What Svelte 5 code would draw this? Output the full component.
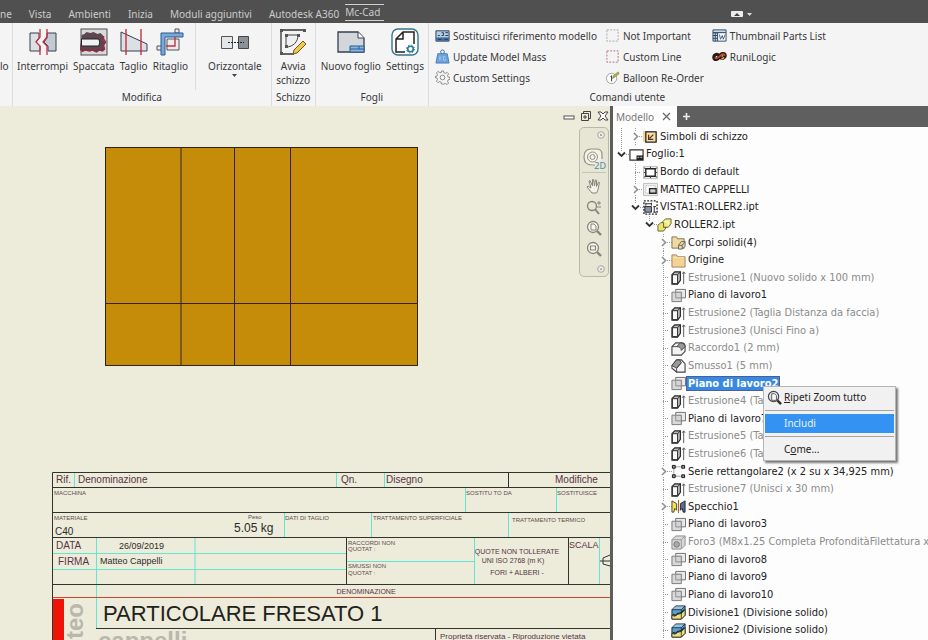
<script lang="ts">
  /**
   * Drawing workspace: ribbon, sheet view and model browser
   */

  interface TreeRow {
    label: string;
    icon: string;
    depth: number;
    arrow?: "open" | "closed";
    muted?: boolean;
    selected?: boolean;
    root?: boolean;
  }

  const tabs = ["ne", "Vista", "Ambienti", "Inizia", "Moduli aggiuntivi", "Autodesk A360"];

  const modifyTools = [
    { label: "Interrompi", icon: "break" },
    { label: "Spaccata", icon: "breakout" },
    { label: "Taglio", icon: "slice" },
    { label: "Ritaglio", icon: "crop" },
  ];

  const userCommands = [
    [
      { label: "Sostituisci riferimento modello", icon: "replace" },
      { label: "Update Model Mass", icon: "mass" },
      { label: "Custom Settings", icon: "gear" },
    ],
    [
      { label: "Not Important", icon: "dash-grey" },
      { label: "Custom Line", icon: "dash-red" },
      { label: "Balloon Re-Order", icon: "balloon" },
    ],
    [
      { label: "Thumbnail Parts List", icon: "parts" },
      { label: "RuniLogic", icon: "logic" },
    ],
  ];

  const rows: TreeRow[] = [
    { label: "Simboli di schizzo", icon: "sketch", depth: 1, arrow: "closed", root: true },
    { label: "Foglio:1", icon: "sheet", depth: 0, arrow: "open" },
    { label: "Bordo di default", icon: "border", depth: 1 },
    { label: "MATTEO CAPPELLI", icon: "title", depth: 1, arrow: "closed" },
    { label: "VISTA1:ROLLER2.ipt", icon: "view", depth: 1, arrow: "open" },
    { label: "ROLLER2.ipt", icon: "part", depth: 2, arrow: "open" },
    { label: "Corpi solidi(4)", icon: "bodies", depth: 3, arrow: "closed" },
    { label: "Origine", icon: "folder", depth: 3, arrow: "closed" },
    { label: "Estrusione1 (Nuovo solido x 100 mm)", icon: "extrude", depth: 3, muted: true },
    { label: "Piano di lavoro1", icon: "plane", depth: 3 },
    { label: "Estrusione2 (Taglia Distanza da faccia)", icon: "extrude", depth: 3, muted: true },
    { label: "Estrusione3 (Unisci Fino a)", icon: "extrude", depth: 3, muted: true },
    { label: "Raccordo1 (2 mm)", icon: "fillet", depth: 3, muted: true },
    { label: "Smusso1 (5 mm)", icon: "chamfer", depth: 3, muted: true },
    { label: "Piano di lavoro2", icon: "plane", depth: 3, selected: true },
    { label: "Estrusione4 (Ta", icon: "extrude", depth: 3, muted: true },
    { label: "Piano di lavoro7", icon: "plane", depth: 3 },
    { label: "Estrusione5 (Ta", icon: "extrude", depth: 3, muted: true },
    { label: "Estrusione6 (Ta", icon: "extrude", depth: 3, muted: true },
    { label: "Serie rettangolare2 (x 2 su x 34,925 mm)", icon: "pattern", depth: 3, arrow: "closed" },
    { label: "Estrusione7 (Unisci x 30 mm)", icon: "extrude", depth: 3, muted: true },
    { label: "Specchio1", icon: "mirror", depth: 3, arrow: "closed" },
    { label: "Piano di lavoro3", icon: "plane", depth: 3 },
    { label: "Foro3 (M8x1.25 Completa ProfonditàFilettatura x", icon: "hole", depth: 3, muted: true },
    { label: "Piano di lavoro8", icon: "plane", depth: 3 },
    { label: "Piano di lavoro9", icon: "plane", depth: 3 },
    { label: "Piano di lavoro10", icon: "plane", depth: 3 },
    { label: "Divisione1 (Divisione solido)", icon: "split", depth: 3 },
    { label: "Divisione2 (Divisione solido)", icon: "split", depth: 3 },
  ];
</script>

{#snippet icon(name: string, size: number)}
  <svg width={size} height={size} aria-hidden="true"><use href="#i-{name}" /></svg>
{/snippet}

{#snippet bigTool(label: string, name: string)}
  <button class="tool">
    {@render icon(name, 28)}
    <span>{label}</span>
  </button>
{/snippet}

<svg class="defs" aria-hidden="true">
  <!-- ribbon, large -->
  <symbol id="i-break" viewBox="0 0 28 28">
    <path d="M1 5h9v5l-3 4 4 4v5H1z" fill="#dde0e4" stroke="#34404f" />
    <path d="M27 5h-9v5l-3 4 4 4v5h8z" fill="#c3cad3" stroke="#34404f" />
    <path d="M11 1v8l-4 5 4 4v9M18 1v8l-4 5 4 4v9" fill="none" stroke="#c6313f" stroke-width="1.3" />
  </symbol>
  <symbol id="i-breakout" viewBox="0 0 28 28">
    <rect x="1" y="1" width="26" height="26" fill="#d9d9dc" stroke="#4a4a50" />
    <path d="M1.500 10V7l3-1 2-2 4 1 3-1 4 2 3-1 3 3v4l2 3-2 3 1 4-3 1-2-1-3 2-4-2-3 1-4-1-3 2-3-2z" fill="#5d4650" />
    <path d="M1.500 19l1 4 3-1 4 1 3-1 4 2 3-2 3 1 2-2-1-4 2-3-2-3V8" fill="none" stroke="#9b2740" stroke-width="1.500" />
    <path d="M1.500 11h17c1.500 2 1.500 5 0 7h-17z" fill="#f1f1f1" stroke="#222" />
  </symbol>
  <symbol id="i-slice" viewBox="0 0 28 28">
    <path d="M1 4l26 12v7H1z" fill="#dbe0e7" stroke="#34404f" />
    <path d="M6 1v26M21 1v26" stroke="#c6313f" stroke-width="1.4" />
  </symbol>
  <symbol id="i-crop" viewBox="0 0 28 28">
    <path d="M1 18h5v4H1zM19 1h4v4h-4zM11 11h12v11H11z" fill="#ececec" stroke="#555" />
    <path d="M19 9v9h-9" fill="none" stroke="#c6313f" stroke-width="1.4" />
    <path d="M5 5h22v4H9v18H5z" fill="#79a9d8" stroke="#2b5a90" />
  </symbol>
  <symbol id="i-align" viewBox="0 0 28 28">
    <path d="M0.500 8.500h11v12h-11z" fill="#e3e6e8" stroke="#555" />
    <path d="M17.500 8.500h10v12h-10z" fill="#8a9199" stroke="#454545" />
    <path d="M7 14.500h16" stroke="#222" stroke-dasharray="2 1" />
  </symbol>
  <symbol id="i-start" viewBox="0 0 28 28">
    <path d="M2 2h24M2 2v24h13" fill="none" stroke="#333" stroke-width="1.3" />
    <path d="M7 7h12c0 7-5 12-12 12z" fill="#f0f0f0" stroke="#444" />
    <path d="M1 1h3v3H1zM24 1h3v3h-3zM1 24h3v3H1zM6 6h3v3H6zM18 6h3v3h-3zM6 17h3v3H6z" fill="#555" />
    <path d="M14 26l1-4 9-9 3 3-9 9z" fill="#f1c84d" stroke="#6f5717" />
  </symbol>
  <symbol id="i-newsheet" viewBox="0 0 28 28">
    <path d="M1 4h20l6 6v14H1z" fill="#d3d6db" stroke="#34404f" stroke-width="1.3" />
    <path d="M21 4v6h6" fill="#fff" stroke="#34404f" />
    <path d="M13 18h14v6H13zM13 21h14M22 18v3" fill="#8bb4e2" stroke="#2b5a90" />
  </symbol>
  <symbol id="i-settings" viewBox="0 0 28 28">
    <rect x="1" y="1" width="26" height="26" rx="6" fill="#fff" stroke="#35768d" stroke-width="1.4" />
    <path d="M14 24H5V11l7-7h11v12M12 4v7H5" fill="none" stroke="#222" stroke-width="1.5" />
    <circle cx="19.500" cy="21" r="2.800" fill="none" stroke="#27789b" stroke-width="1.6" />
    <circle cx="19.500" cy="21" r="4" fill="none" stroke="#27789b" stroke-dasharray="1.500 1.640" />
  </symbol>
  <!-- ribbon, small -->
  <symbol id="i-replace" viewBox="0 0 16 16">
    <path d="M1 3h14v11H1z" fill="#b5cce7" stroke="#26384f" />
    <path d="M1 10h14v4H1z" fill="#46729f" />
    <path d="M3 8h2M7 5h2v3H7M11 5h3M11 8h3M3 12h4M10 12h4" fill="none" stroke="#1f3450" />
  </symbol>
  <symbol id="i-mass" viewBox="0 0 16 16">
    <circle cx="8" cy="3" r="2" fill="none" stroke="#406f9e" />
    <path d="M3 5h10l2 10H1z" fill="#6ea2db" stroke="#4a7db4" />
    <path d="M5 8v4M5 10l2-2M5 10l2 2M11 8H9v4h2v-2" fill="none" stroke="#9cc5ee" />
  </symbol>
  <symbol id="i-gear" viewBox="0 0 16 16">
    <path d="M7 1h2l.5 2 1.500.6 2-1 1.400 1.400-1 2 .6 1.500 2 .5v2l-2 .5-.6 1.500 1 2-1.400 1.400-2-1-1.500.6L9 15H7l-.5-2-1.500-.6-2 1L1.600 12l1-2L2 8.500 0 8V7l2-.5.6-1.500-1-2L3 1.600l2 1L6.500 3z" fill="none" stroke="#858585" />
    <circle cx="8" cy="8" r="2.500" fill="none" stroke="#858585" />
  </symbol>
  <symbol id="i-dash-grey" viewBox="0 0 16 16">
    <rect x="2" y="2" width="12" height="12" fill="none" stroke="#a3a3a3" stroke-dasharray="2 1.500" />
  </symbol>
  <symbol id="i-dash-red" viewBox="0 0 16 16">
    <rect x="2" y="2" width="12" height="12" fill="none" stroke="#aa6c74" stroke-dasharray="2 1.500" />
  </symbol>
  <symbol id="i-balloon" viewBox="0 0 16 16">
    <circle cx="7" cy="9" r="5.500" fill="#fafafa" stroke="#a0a0a0" />
    <path d="M6 7l1-1v6" fill="none" stroke="#333" />
    <path d="M8 9l1-3 5-4 1 2-5 4z" fill="#a9b944" stroke="#69792b" stroke-width=".6" />
  </symbol>
  <symbol id="i-parts" viewBox="0 0 16 16">
    <path d="M1 2h14v3H1zM1 5h5v9H1zM1 8h5M1 11h5M3.500 5v9" fill="#c9d9e6" stroke="#30485f" />
    <path d="M6 5h9v9H6z" fill="#fff" stroke="#30485f" />
    <path d="M8 7l1 5 2-4 1 4 2-5" fill="none" stroke="#2f5d90" />
  </symbol>
  <symbol id="i-logic" viewBox="0 0 16 16">
    <path d="M8 8c-2 4-6 4-6 1s4-5 6-1 6 1 6-1-4-4-6 1" fill="none" stroke="#2b1a14" stroke-width="3.500" />
    <path d="M3 9c1 2 3 1 5-1s4-4 6-1" fill="none" stroke="#d5472c" stroke-width="1.600" />
    <path d="M10 11l3-2" stroke="#e6b33c" stroke-width="1.500" />
  </symbol>
  <!-- browser tree -->
  <symbol id="i-sketch" viewBox="0 0 16 16">
    <path d="M0 2h5l1 1h9v11H0z" fill="#f1d3a0" />
    <rect x="3" y="3" width="11" height="11" fill="#f4dfa5" stroke="#222" stroke-width="1.300" />
    <path d="M6 6v5h5M7 10l4-4" fill="none" stroke="#5a2c1c" stroke-width="1.300" />
  </symbol>
  <symbol id="i-sheet" viewBox="0 0 16 16">
    <path d="M1 3h14v11H1z" fill="#fff" stroke="#333" stroke-width="1.300" />
    <path d="M8 9h7v5H8z" fill="#222" />
    <path d="M9 11h2M12 11h2" stroke="#ccc" />
  </symbol>
  <symbol id="i-border" viewBox="0 0 16 16">
    <path d="M.5 1.500h15v13H.5z" fill="#eee" stroke="#bbb" />
    <path d="M3 4h10v8H3z" fill="#fff" stroke="#222" stroke-width="1.500" />
    <path d="M1 8h2M13 8h2M8 2v2M8 12v2M1 3l2 1M15 3l-2 1M1 13l2-1M15 13l-2-1" stroke="#333" />
  </symbol>
  <symbol id="i-title" viewBox="0 0 16 16">
    <path d="M.5 1.500h15v13H.5z" fill="#eee" stroke="#bbb" />
    <path d="M3 4h10v8H3z" fill="#fff" stroke="#aaa" stroke-dasharray="1 1" />
    <path d="M7 7h7v5H7z" fill="#ccc" stroke="#222" stroke-width="1.400" />
  </symbol>
  <symbol id="i-view" viewBox="0 0 16 16">
    <path d="M1 1h14v14H1z" fill="none" stroke="#222" stroke-width="1.400" stroke-dasharray="2 1.500" />
    <path d="M2 7h7v6H2z" fill="#8795ab" stroke="#222" />
    <path d="M3 4h6M3 3v3M9 3v3M12 7v6M11 7h3M11 13h3" stroke="#222" />
  </symbol>
  <symbol id="i-part" viewBox="0 0 16 16">
    <path d="M6 5l3-3h6v5l-3 4H6z" fill="#f0ea8a" stroke="#66622c" />
    <path d="M1 9l3-3h3v5h3l-3 4H1z" fill="#ebe36c" stroke="#66622c" />
    <path d="M8 5h4v4" fill="none" stroke="#fffcd6" />
  </symbol>
  <symbol id="i-bodies" viewBox="0 0 16 16">
    <path d="M1 2h5l1 2h7v10H1z" fill="#efd9a0" stroke="#87714a" />
    <path d="M8 11l3-4h4v5l-3 3H8z" fill="#dedebb" stroke="#68664d" />
    <path d="M8 11h4v4M12 11l3-4" fill="none" stroke="#68664d" />
  </symbol>
  <symbol id="i-folder" viewBox="0 0 16 16">
    <path d="M1 2h5l1 2h8v11H1z" fill="#f3d395" stroke="#a58251" />
    <path d="M2 5h12" stroke="#fae5b5" />
  </symbol>
  <symbol id="i-extrude" viewBox="0 0 16 16">
    <path d="M1 5l3-3h6v9l-3 4H1z" fill="#bdbdbd" stroke="#222" stroke-width="1.200" />
    <path d="M1.500 5H7v9.500H1.500z" fill="#f7f7f7" stroke="#222" />
    <path d="M7 5l3-3" stroke="#222" />
    <path d="M13.500 15V2M12 4l1.500-2L15 4" fill="none" stroke="#555" />
  </symbol>
  <symbol id="i-plane" viewBox="0 0 16 16">
    <path d="M5 1.500h10.500v9H5z" fill="#e8e8e8" stroke="#6d6d6d" />
    <path d="M1 4.500h10v10H1z" fill="#cfcfcf" fill-opacity=".8" stroke="#777" />
    <path d="M5 4v6.500h6" fill="none" stroke="#999" />
  </symbol>
  <symbol id="i-fillet" viewBox="0 0 16 16">
    <path d="M1 6l4-4h6c3 0 4 2 4 4v5l-4 4H1z" fill="#f3f3f3" stroke="#444" stroke-width="1.200" />
    <path d="M6 6l4-4c3 0 5 2 5 4l-4 4c0-3-2-4-5-4z" fill="#999" stroke="#444" />
    <path d="M1 6h5" stroke="#444" />
  </symbol>
  <symbol id="i-chamfer" viewBox="0 0 16 16">
    <path d="M1 8l5-6h5l4 4v9H6l-5-4z" fill="#f6f6f6" stroke="#444" stroke-width="1.200" />
    <path d="M1 8l5-6h3l2 3-5 6z" fill="#999" stroke="#444" />
    <path d="M6 15v-4l5-6" fill="none" stroke="#444" />
  </symbol>
  <symbol id="i-pattern" viewBox="0 0 16 16">
    <path d="M3 3h10M3 13h10M3 3v10" stroke="#444" stroke-dasharray="1 1" />
    <path d="M1.500 1.500h3v3h-3zM11.500 1.500h3v3h-3zM1.500 11.500h3v3h-3zM11.500 11.500h3v3h-3z" fill="#999" stroke="#111" />
  </symbol>
  <symbol id="i-mirror" viewBox="0 0 16 16">
    <path d="M1 2l5 3v7l-2-2-1 4H1z" fill="#f3e15b" stroke="#4c451b" />
    <path d="M15 2l-5 3v7l2-2 1 4h2z" fill="#526f9d" stroke="#222" />
    <path d="M8 1v14" stroke="#b5622e" stroke-width="1.200" />
  </symbol>
  <symbol id="i-hole" viewBox="0 0 16 16">
    <path d="M1 5l4-4h10v10l-4 4H1z" fill="#d9d9d9" stroke="#888" />
    <path d="M1 5h10v10M11 5l4-4" fill="none" stroke="#999" />
    <circle cx="6" cy="10" r="3" fill="#aaa" stroke="#777" />
  </symbol>
  <symbol id="i-split" viewBox="0 0 16 16">
    <path d="M1 5l4-4h10v10l-4 4H1z" fill="#5a9fd2" stroke="#222" />
    <path d="M1 11l3 1 3-2 4-1 4-4v6l-4 4H1z" fill="#f0df77" stroke="#222" stroke-width=".8" />
    <path d="M2 4.500L5 1.500h9l-3 3z" fill="#8fc3e8" />
    <path d="M1 5h10l4-4M11 5v10" fill="none" stroke="#222" stroke-width=".8" />
    <path d="M2 10l3 1 2-2 4-1 3-3" fill="none" stroke="#222" stroke-width="1.200" />
  </symbol>
  <!-- view tools -->
  <symbol id="i-wheel" viewBox="0 0 24 24">
    <path d="M20 13V8q0-5-6-5H9Q2 3 2 11t8 8h3" fill="#f3f2e7" stroke="#919186" stroke-width="1.200" />
    <circle cx="10.500" cy="11" r="5" fill="none" stroke="#919186" />
    <circle cx="10.500" cy="11" r="2.500" fill="none" stroke="#919186" />
  </symbol>
  <symbol id="i-hand" viewBox="0 0 16 16">
    <path d="M6 15c-2-2-3-4-5-6l1-1 3 2L3 3l1-.5L6.500 8 6.500 1.500h1L8.500 8l1-6 1 .2L10.500 8.500l2-4.500 1 .5c-1 3-1 8-3 10.500z" fill="#f4f3e9" stroke="#85857b" />
  </symbol>
  <symbol id="i-zoom" viewBox="0 0 16 16">
    <circle cx="6" cy="7" r="4.500" fill="none" stroke="#85857b" stroke-width="1.300" />
    <path d="M9 10l4 5" stroke="#85857b" stroke-width="2" />
    <path d="M11 4h4M13 2v4M11 8h4" stroke="#85857b" />
  </symbol>
  <symbol id="i-zoomall" viewBox="0 0 16 16">
    <circle cx="7" cy="7" r="5.500" fill="#f7f6ee" stroke="#85857b" stroke-width="1.300" />
    <path d="M5 4h3l2 2v4H5z" fill="none" stroke="#85857b" />
    <path d="M11 11l4 4" stroke="#85857b" stroke-width="2.400" />
  </symbol>
  <symbol id="i-zoomwin" viewBox="0 0 16 16">
    <circle cx="7" cy="7" r="5.500" fill="#f7f6ee" stroke="#85857b" stroke-width="1.300" />
    <path d="M4.500 5h5v4h-5z" fill="none" stroke="#85857b" stroke-width="1.200" />
    <path d="M11 11l4 4" stroke="#85857b" stroke-width="2.400" />
  </symbol>
  <symbol id="i-menuzoom" viewBox="0 0 16 16">
    <circle cx="7" cy="7" r="5.500" fill="#dde5ec" stroke="#444" stroke-width="1.200" />
    <path d="M5 4h3l2 2v5H5z" fill="#fff" stroke="#555" />
    <path d="M11 11l4 4" stroke="#333" stroke-width="2.600" />
  </symbol>
</svg>

<div class="workspace">
  <nav class="tabs" aria-label="Ribbon">
    {#each tabs as tab}
      <a href="#{tab}">{tab}</a>
    {/each}
    <a class="active" href="#mc-cad">Mc-Cad</a>
    <button class="collapse" aria-label="Riduci">
      <svg width="22" height="8" viewBox="0 0 22 8">
        <rect y="1" width="12" height="6" rx="1" fill="#eee" />
        <path d="M3 6l3-3 3 3z" fill="#444" />
        <path d="M16 3h5l-2.500 3z" fill="#ddd" />
      </svg>
    </button>
  </nav>

  <header class="ribbon">
    <section class="group cut">
      <div class="tools"><span>lo</span></div>
    </section>
    <section class="group modify">
      <div class="tools">
        {#each modifyTools as tool}
          {@render bigTool(tool.label, tool.icon)}
        {/each}
        <div class="align">
          <button class="tool">
            {@render icon("align", 28)}
            <span>Orizzontale</span>
            <svg width="5" height="3" viewBox="0 0 5 3"><path d="M0 0h5L2.500 3z" fill="#444" /></svg>
          </button>
        </div>
      </div>
      <h2>Modifica</h2>
    </section>
    <section class="group sketch">
      <div class="tools">{@render bigTool("Avvia schizzo", "start")}</div>
      <h2>Schizzo</h2>
    </section>
    <section class="group sheets">
      <div class="tools">
        {@render bigTool("Nuovo foglio", "newsheet")}
        {@render bigTool("Settings", "settings")}
      </div>
      <h2>Fogli</h2>
    </section>
    <section class="group user">
      <div class="tools">
        {#each userCommands as column}
          <div class="column">
            {#each column as command}
              <button class="command">
                {@render icon(command.icon, 15)}
                <span>{command.label}</span>
              </button>
            {/each}
          </div>
        {/each}
      </div>
      <h2>Comandi utente</h2>
    </section>
  </header>

  <main>
    <div class="canvas">
      <svg class="sheet" width="610" height="534" viewBox="0 106 610 534" role="img" aria-label="Tavola">
        <rect x="105.500" y="147.500" width="312" height="218" fill="#c58c09" stroke="#2b2212" />
        <path class="edge" d="M181 147v219M234.500 147v219M290.500 147v219M105 303.500h313" />

        <path class="cyan" d="M74.500 473v14M336.500 473v14M384.500 473v14M465.500 488v25M556.500 488v25M284.500 513v24M371.500 513v24M508.500 513v24" />
        <path class="cyan" d="M96.500 538v90M195 538v46M53 553.500h293M53 569.500h293M346 561.500h128M474.500 538v46M599.500 538v46" />
        <path class="frame" d="M610 472.500H52.500V640M52 487.500h558M52 512.500h558M52 537.500h558M52 584.500h558M508.500 473v14M346.500 538v46M568.500 538v46M96 628.500h514M435.500 628v12" />
        <path d="M53 597.500h557" stroke="#c8452f" />
        <rect x="53" y="599" width="11" height="41" fill="#ee1208" />
        <path d="M600 561h10M610 555l-7 3v6l7 2" fill="none" stroke="#333" />

        <g class="heads">
          <text x="56" y="483">Rif.</text>
          <text x="78" y="483">Denominazione</text>
          <text x="341" y="483">Qn.</text>
          <text x="386" y="483">Disegno</text>
          <text x="555" y="483">Modifiche</text>
          <text x="440" y="639" class="fine">Proprietà riservata - Riproduzione vietata</text>
        </g>
        <g class="tiny">
          <text x="54" y="495">MACCHINA</text>
          <text x="466" y="495">SOSTITU TO DA</text>
          <text x="557" y="495">SOSTITUISCE</text>
          <text x="54" y="520">MATERIALE</text>
          <text x="248" y="519">Peso</text>
          <text x="285" y="520">DATI DI TAGLIO</text>
          <text x="373" y="520">TRATTAMENTO SUPERFICIALE</text>
          <text x="512" y="522">TRATTAMENTO TERMICO</text>
          <text x="348" y="545">RACCORDI NON</text>
          <text x="348" y="551">QUOTAT :</text>
          <text x="348" y="568">SMUSSI NON</text>
          <text x="348" y="575">QUOTAT :</text>
        </g>
        <g class="fields">
          <text x="55" y="535" class="material">C40</text>
          <text x="234" y="532" class="weight">5.05 kg</text>
          <text x="56" y="549">DATA</text>
          <text x="58" y="565">FIRMA</text>
          <text x="119" y="549" class="value">26/09/2019</text>
          <text x="100" y="564" class="value">Matteo Cappelli</text>
          <text x="569" y="548" class="scale">SCALA</text>
        </g>
        <g class="notes">
          <text x="517" y="554">QUOTE NON TOLLERATE</text>
          <text x="513" y="563">UNI ISO 2768 (m K)</text>
          <text x="517" y="575">FORI + ALBERI -</text>
          <text x="366" y="594">DENOMINAZIONE</text>
        </g>
        <text x="103" y="621" class="part-name">PARTICOLARE FRESATO 1</text>
        <text x="98" y="649" class="logo">cappelli</text>
        <text x="0" y="0" text-anchor="end" transform="translate(83 603) rotate(-90)" class="logo">teo</text>
      </svg>

      <div class="window-buttons">
        <button aria-label="Riduci a icona">
          <svg width="12" height="12" viewBox="0 0 12 12"><rect x="1" y="6" width="10" height="3" fill="#fff" stroke="#555" /></svg>
        </button>
        <button aria-label="Ripristina">
          <svg width="12" height="12" viewBox="0 0 12 12"><path d="M3.500 3V1.500h7v7H9M1.500 3.500h7v7h-7zM4 6h2v2H4z" fill="none" stroke="#444" /></svg>
        </button>
        <button aria-label="Chiudi">
          <svg width="12" height="12" viewBox="0 0 12 12"><path d="M1 2h3l2 2 2-2h3L8 6l3 4H8L6 8l-2 2H1l3-4z" fill="#fff" stroke="#444" /></svg>
        </button>
      </div>

      <div class="view-tools">
        <svg width="8" height="8" viewBox="0 0 8 8"><circle cx="4" cy="4" r="3.300" fill="#eee" stroke="#aaa898" /><path d="M3 3l2 2M5 3L3 5" stroke="#999" stroke-width=".8" /></svg>
        <button class="wheel" aria-label="Ruota di navigazione">{@render icon("wheel", 24)}<b>2D</b></button>
        <button aria-label="Pan">{@render icon("hand", 16)}</button>
        <button aria-label="Zoom">{@render icon("zoom", 16)}</button>
        <button aria-label="Zoom tutto">{@render icon("zoomall", 16)}</button>
        <button aria-label="Zoom finestra">{@render icon("zoomwin", 16)}</button>
        <svg width="8" height="8" viewBox="0 0 8 8"><circle cx="4" cy="4" r="3.300" fill="#eee" stroke="#aaa898" /><path d="M2.500 3.500h3L4 5.500z" fill="#999" /></svg>
      </div>
    </div>

    <aside class="browser">
      <div class="panel-tabs">
        <span class="panel-tab">
          Modello
          <button aria-label="Chiudi Modello">
            <svg width="9" height="9" viewBox="0 0 9 9"><path d="M1 1l7 7M8 1L1 8" stroke="#666" stroke-width="1.200" /></svg>
          </button>
        </span>
        <button class="add" aria-label="Aggiungi">
          <svg width="9" height="9" viewBox="0 0 9 9"><path d="M4.500 1v7M1 4.500h7" stroke="#eee" stroke-width="1.600" /></svg>
        </button>
      </div>

      <ul class="tree">
        {#each rows as row}
          <li class:muted={row.muted} class:selected={row.selected}>
            {#each { length: row.depth } as _, level}
              <span class="guide" class:line={row.root && level === 0}></span>
            {/each}
            <span class="guide line dash" class:half={row.arrow === "open"}>
              {#if row.arrow === "open"}
                <svg width="9" height="7" viewBox="0 0 9 7"><path d="M1 1.500L4.500 5 8 1.500" fill="none" stroke="#333" stroke-width="1.800" /></svg>
              {:else if row.arrow === "closed"}
                <svg width="7" height="9" viewBox="0 0 7 9"><path d="M2 1l3.500 3.500L2 8" fill="none" stroke="#909090" stroke-width="1.600" /></svg>
              {/if}
            </span>
            {@render icon(row.icon, 15)}
            <span class="label">{row.label}</span>
            {#if row.selected}
              <div class="menu" role="menu">
                <button role="menuitem">{@render icon("menuzoom", 15)}<span><u>R</u>ipeti Zoom tutto</span></button>
                <hr />
                <button role="menuitem" class="current"><span>Includi</span></button>
                <hr />
                <button role="menuitem"><span>C<u>o</u>me...</span></button>
              </div>
            {/if}
          </li>
        {/each}
      </ul>
    </aside>
  </main>
</div>

<style>
  :global(body) {
    margin: 0;
    overflow: hidden;
  }

  .defs {
    position: absolute;
    width: 0;
    height: 0;
  }

  .workspace {
    display: flex;
    flex-direction: column;
    min-height: 100vh;
    font-family: "Noto Sans", "Open Sans", sans-serif;
    font-size: 10px;
    line-height: 14px;
    color: #383838;
  }

  button {
    margin: 0;
    padding: 0;
    border: 0;
    background: none;
    font: inherit;
    color: inherit;
  }

  svg {
    display: block;
    flex: none;
  }

  .tabs {
    display: flex;
    align-items: flex-end;
    gap: 17px;
    height: 23px;
    background: #505050;
  }

  .tabs a {
    padding-bottom: 2px;
    color: #cccccc;
    text-decoration: none;
    white-space: nowrap;
  }

  .tabs .active {
    margin: 0 0 2px -11px;
    padding: 0 4px 1px 0;
    border-top: 1px solid #d0d0d0;
    border-bottom: 1px solid #d0d0d0;
  }

  .collapse {
    margin: 0 175px 5px auto;
  }

  .ribbon {
    display: flex;
    height: 83px;
    background: #f4f4f5;
  }

  .group {
    display: flex;
    flex-direction: column;
    border-right: 1px solid #dcdcde;
  }

  .group h2 {
    margin: 0 0 2px;
    font-size: 10px;
    font-weight: normal;
    text-align: center;
  }

  .group .tools {
    display: flex;
    flex: 1;
  }

  .cut {
    width: 12px;
  }

  .cut span {
    padding-top: 36px;
  }

  .modify .tools {
    gap: 5px;
    padding-left: 4px;
  }

  .tool {
    display: flex;
    flex-direction: column;
    align-items: center;
    padding-top: 5px;
  }

  .tool span {
    margin: 3px 0 1px;
    line-height: 14px;
  }

  .align {
    display: flex;
    margin-left: 2px;
    padding: 0 9px 0 12px;
    border-left: 1px solid #dcdcde;
  }

  .sketch {
    width: 43px;
  }

  .sketch .tools {
    justify-content: center;
  }

  .sheets .tools {
    gap: 5px;
    padding: 0 4px 0 5px;
  }

  .user {
    border-right: 0;
  }

  .user .tools {
    gap: 8px;
    padding: 2px 0 0 6px;
  }

  .column {
    display: flex;
    flex-direction: column;
  }

  .command {
    display: flex;
    align-items: center;
    gap: 3px;
    height: 21px;
    white-space: nowrap;
  }

  main {
    display: flex;
    flex: 1;
  }

  .canvas {
    position: relative;
    flex: 1;
    min-width: 0;
    overflow: hidden;
    background: #edebd9;
  }

  .sheet {
    font-family: "Liberation Sans", Arial, sans-serif;
  }

  .edge {
    fill: none;
    stroke: #352038;
  }

  .frame {
    fill: none;
    stroke: #33332e;
  }

  .cyan {
    fill: none;
    stroke: #62e6d2;
  }

  .heads {
    font-size: 10px;
    fill: #573347;
  }

  .heads .fine {
    font-size: 8px;
  }

  .tiny {
    font-size: 6px;
    fill: #5d4a50;
  }

  .fields {
    font-size: 10px;
    fill: #573347;
  }

  .fields .material {
    fill: #2b2b2b;
  }

  .fields .value {
    font-size: 9px;
    fill: #2b2b2b;
  }

  .fields .scale {
    font-size: 9px;
  }

  .fields .weight {
    font-size: 12px;
    fill: #2b2b2b;
  }

  .notes {
    font-size: 7px;
    fill: #573347;
    text-anchor: middle;
  }

  .part-name {
    font-size: 22px;
    fill: #22221c;
  }

  .logo {
    font-size: 24px;
    font-weight: bold;
    fill: #b9b8ae;
  }

  .window-buttons {
    position: absolute;
    top: 4px;
    right: 1px;
    display: flex;
    gap: 5px;
  }

  .view-tools {
    position: absolute;
    top: 21px;
    right: 1px;
    display: flex;
    flex-direction: column;
    align-items: center;
    gap: 5px;
    width: 28px;
    padding: 3px 0;
    border: 1px solid #b9b8a9;
    border-radius: 5px;
    background: #e7e5d3;
  }

  .view-tools > svg {
    align-self: flex-end;
    margin-right: 3px;
  }

  .view-tools > svg:last-child {
    margin-top: 3px;
  }

  .wheel {
    position: relative;
    padding: 2px 0;
    border-bottom: 1px solid #c4c3b4;
  }

  .wheel b {
    position: absolute;
    right: 0;
    bottom: 1px;
    font-size: 9px;
    font-weight: normal;
    line-height: 10px;
    color: #4c8ba8;
  }

  .browser {
    display: flex;
    flex-direction: column;
    width: 315px;
    border-left: 3px solid #5d5d5a;
    background: #fdfdfd;
  }

  .panel-tabs {
    display: flex;
    height: 21px;
    background: #5f5f5f;
  }

  .panel-tab {
    display: flex;
    align-items: center;
    gap: 8px;
    padding: 0 6px 0 3px;
    background: #fdfdfd;
    color: #777;
  }

  .add {
    padding-left: 5px;
  }

  .tree {
    display: grid;
    flex: 1;
    grid-auto-rows: minmax(17px, 1fr);
    margin: 0;
    padding: 1px;
    list-style: none;
    font-family: "DejaVu Sans Condensed", "DejaVu Sans", sans-serif;
    font-size: 11px;
    color: #222;
  }

  .tree li {
    position: relative;
    display: flex;
    align-items: center;
    min-width: 0;
    white-space: nowrap;
  }

  .tree li > :global(svg) {
    margin-left: 1px;
  }

  .tree .muted {
    color: #8b8b8b;
  }

  .guide {
    display: flex;
    flex: none;
    align-self: stretch;
    align-items: center;
    justify-content: center;
    width: 14px;
  }

  .line {
    background: repeating-linear-gradient(#999 0 1px, transparent 1px 2px) center / 1px 100% no-repeat;
  }

  .line.half {
    background-position: top;
    background-size: 1px 40%;
  }

  .line svg {
    background: #fdfdfd;
  }

  .dash::after {
    content: "";
    width: 5px;
    margin-right: -5px;
    border-top: 1px dotted #999;
  }

  .label {
    margin-left: 1px;
    padding: 0 1px;
  }

  .selected .label {
    background: #3789e2;
    color: #fff;
    font-weight: bold;
    line-height: 13px;
    outline: 1px solid #4b5f96;
  }

  .menu {
    position: absolute;
    z-index: 1;
    top: 11px;
    left: 149px;
    width: 129px;
    padding: 1px;
    border: 1px solid #b5b5b5;
    background: #f1f1f1;
    box-shadow: 2px 2px 2px #777;
    font-family: "Noto Sans", sans-serif;
    font-size: 10px;
    color: #222;
  }

  .menu button {
    display: flex;
    align-items: center;
    width: 100%;
    height: 19px;
    padding-left: 19px;
  }

  .menu :global(svg) {
    margin: 0 2px 0 -17px;
  }

  .menu hr {
    margin: 3px 0;
    border: 0;
    border-top: 1px solid #a5a5a5;
  }

  .menu .current {
    background: #3492f3;
    color: #e9f4ff;
  }
</style>
